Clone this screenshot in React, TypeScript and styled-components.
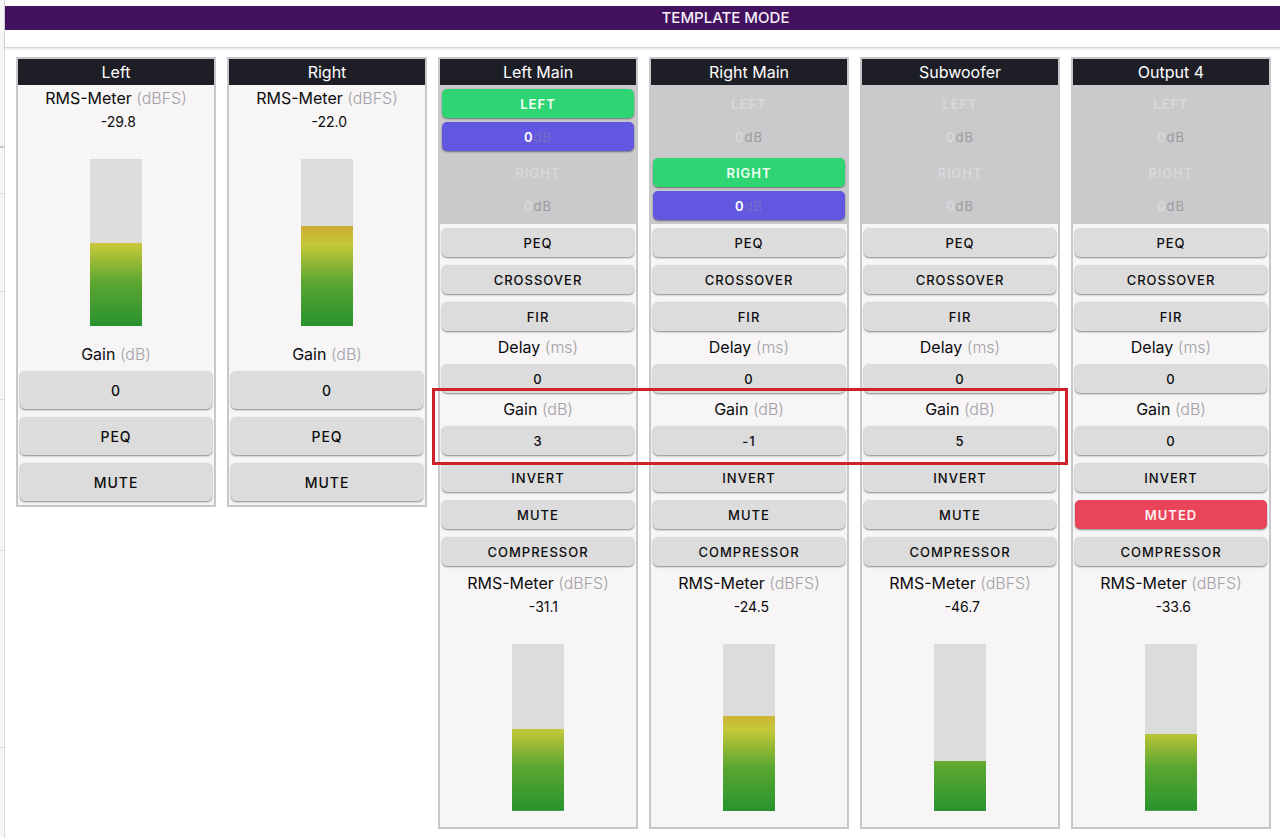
import React from "react";
import styled, { createGlobalStyle } from "styled-components";

const GlobalStyle = createGlobalStyle`
  * { box-sizing: border-box; }
  body {
    margin: 0;
    background: #ffffff;
    color: #0c0c0e;
    font-family: Inter, "Liberation Sans", sans-serif;
  }
`;

const Page = styled.div`
  display: flex;
  min-height: 100vh;
`;

const Rail = styled.aside`
  flex: none;
  width: 5px;
  background: #f6f6f6;
  border-right: 1px solid #d9d9d9;
`;

const RailItem = styled.div<{ $height: number; $strong?: boolean }>`
  height: ${(p) => p.$height}px;
  border-bottom: ${(p) => (p.$strong ? "2px solid #c9c9c9" : "1px solid #dddddd")};
`;

const Main = styled.main`
  flex: 1;
  min-width: 0;
`;

const TopBar = styled.header`
  padding: 6px 0 17px;
  border-bottom: 1px solid #d6d6d6;
  box-shadow: 0 1px 2px rgba(0, 0, 0, 0.12);
`;

const ModeTitle = styled.h1`
  margin: 0;
  padding-left: 166px;
  background: #42125f;
  color: #f4eef8;
  font-size: 15px;
  font-weight: 500;
  line-height: 24px;
  text-align: center;
`;

const Channels = styled.div`
  position: relative;
  display: grid;
  grid-template-columns: repeat(6, minmax(0, 1fr));
  gap: 11px;
  align-items: start;
  padding: 9px 9px 9px 11px;
`;

const Highlight = styled.div`
  position: absolute;
  grid-column: 3 / 6;
  top: 340px;
  left: -6px;
  right: -8px;
  height: 77px;
  border: 3px solid #cc2229;
  pointer-events: none;
`;

const Card = styled.section`
  border: 2px solid #c8c8ca;
  background: #f7f5f6;
`;

const CardTitle = styled.h2`
  margin: 0;
  background: #1d1e26;
  color: #ffffff;
  font-size: 16px;
  font-weight: 400;
  line-height: 26px;
  text-align: center;
`;

const Caption = styled.div`
  font-size: 16px;
  line-height: 25px;
  text-align: center;
  white-space: nowrap;
`;

const Unit = styled.span`
  color: #a2a2a6;
  font-weight: 300;
`;

const Routing = styled.div`
  display: grid;
  gap: 7px;
  padding: 4px 2px;
  background: #cacacc;
`;

const Route = styled.div`
  display: grid;
  gap: 4px;
`;

const tones = {
  plain: { bg: "#dcdcdc", fg: "#0c0c0e", unit: "#9c9ca0", weight: 500 },
  green: { bg: "#2fd573", fg: "#f2fff6", unit: "#f2fff6", weight: 600 },
  violet: { bg: "#6257e0", fg: "#ffffff", unit: "#776cc4", weight: 600 },
  red: { bg: "#ea445a", fg: "#fff0f2", unit: "#fff0f2", weight: 600 },
  off: { bg: "transparent", fg: "#dadadc", unit: "#9b9b9e", weight: 500 },
};

type Tone = keyof typeof tones;

const Control = styled.button<{ $tone?: Tone; $large?: boolean }>`
  display: block;
  width: 100%;
  height: ${(p) => (p.$large ? 38 : 29)}px;
  padding: 0;
  border: 0;
  border-radius: 5px;
  background: ${(p) => tones[p.$tone ?? "plain"].bg};
  color: ${(p) => tones[p.$tone ?? "plain"].fg};
  box-shadow: ${(p) =>
    p.$tone === "off" ? "none" : "0 1px 2px rgba(0, 0, 0, 0.45)"};
  font-family: inherit;
  font-size: ${(p) => (p.$large ? 14 : 13)}px;
  font-weight: ${(p) => tones[p.$tone ?? "plain"].weight};
  letter-spacing: 1px;
  cursor: pointer;

  ${Unit} {
    color: ${(p) => tones[p.$tone ?? "plain"].unit};
    font-weight: 400;
  }
`;

const Cell = styled.div`
  padding: 4px 2px;
`;

const MeterBox = styled.div`
  display: flex;
  flex-direction: column;
  align-items: center;
  padding: 1px 0 16px;
`;

const Reading = styled.output`
  width: 40px;
  margin-bottom: 26px;
  font-size: 14px;
  line-height: 22px;
  text-align: right;
`;

const Track = styled.div`
  display: flex;
  align-items: flex-end;
  width: 52px;
  height: 167px;
  background: #dcdcdc;
`;

const Fill = styled.div`
  width: 100%;
  background: linear-gradient(
      to top,
      #28932f 0%,
      #5aa631 26%,
      #c6c838 49%,
      #cfa834 61%,
      #d04a34 100%
    )
    bottom / 100% 167px no-repeat;
`;

function Meter({ db, level }: { db: string; level: number }) {
  return (
    <MeterBox>
      <Caption>
        RMS-Meter <Unit>(dBFS)</Unit>
      </Caption>
      <Reading>{db}</Reading>
      <Track role="meter" aria-label="RMS level" aria-valuenow={Number(db)}>
        <Fill style={{ height: `${level}%` }} />
      </Track>
    </MeterBox>
  );
}

function Action({
  label,
  tone,
  large,
}: {
  label: string;
  tone?: Tone;
  large?: boolean;
}) {
  return (
    <Cell>
      <Control type="button" $tone={tone} $large={large}>
        {label}
      </Control>
    </Cell>
  );
}

function Source({ name, active }: { name: string; active: boolean }) {
  return (
    <Route>
      <Control type="button" $tone={active ? "green" : "off"}>
        {name}
      </Control>
      <Control type="button" $tone={active ? "violet" : "off"}>
        0<Unit>dB</Unit>
      </Control>
    </Route>
  );
}

const inputs = [
  { name: "Left", db: "-29.8", level: 50 },
  { name: "Right", db: "-22.0", level: 60 },
];

const outputs = [
  { name: "Left Main", source: "LEFT", gain: "3", db: "-31.1", level: 49 },
  { name: "Right Main", source: "RIGHT", gain: "-1", db: "-24.5", level: 57 },
  { name: "Subwoofer", gain: "5", db: "-46.7", level: 30 },
  { name: "Output 4", gain: "0", muted: true, db: "-33.6", level: 46 },
];

export default function App() {
  return (
    <>
      <GlobalStyle />
      <Page>
        <Rail>
          <RailItem $height={148} $strong />
          <RailItem $height={46} />
          <RailItem $height={98} />
          <RailItem $height={108} />
          <RailItem $height={151} />
          <RailItem $height={197} />
        </Rail>
        <Main>
          <TopBar>
            <ModeTitle>TEMPLATE MODE</ModeTitle>
          </TopBar>
          <Channels>
            {inputs.map((c) => (
              <Card key={c.name}>
                <CardTitle>{c.name}</CardTitle>
                <Meter db={c.db} level={c.level} />
                <Caption>
                  Gain <Unit>(dB)</Unit>
                </Caption>
                <Action label="0" large />
                <Action label="PEQ" large />
                <Action label="MUTE" large />
              </Card>
            ))}
            {outputs.map((c) => (
              <Card key={c.name}>
                <CardTitle>{c.name}</CardTitle>
                <Routing>
                  <Source name="LEFT" active={c.source === "LEFT"} />
                  <Source name="RIGHT" active={c.source === "RIGHT"} />
                </Routing>
                <Action label="PEQ" />
                <Action label="CROSSOVER" />
                <Action label="FIR" />
                <Caption>
                  Delay <Unit>(ms)</Unit>
                </Caption>
                <Action label="0" />
                <Caption>
                  Gain <Unit>(dB)</Unit>
                </Caption>
                <Action label={c.gain} />
                <Action label="INVERT" />
                <Action
                  label={c.muted ? "MUTED" : "MUTE"}
                  tone={c.muted ? "red" : "plain"}
                />
                <Action label="COMPRESSOR" />
                <Meter db={c.db} level={c.level} />
              </Card>
            ))}
            <Highlight />
          </Channels>
        </Main>
      </Page>
    </>
  );
}
